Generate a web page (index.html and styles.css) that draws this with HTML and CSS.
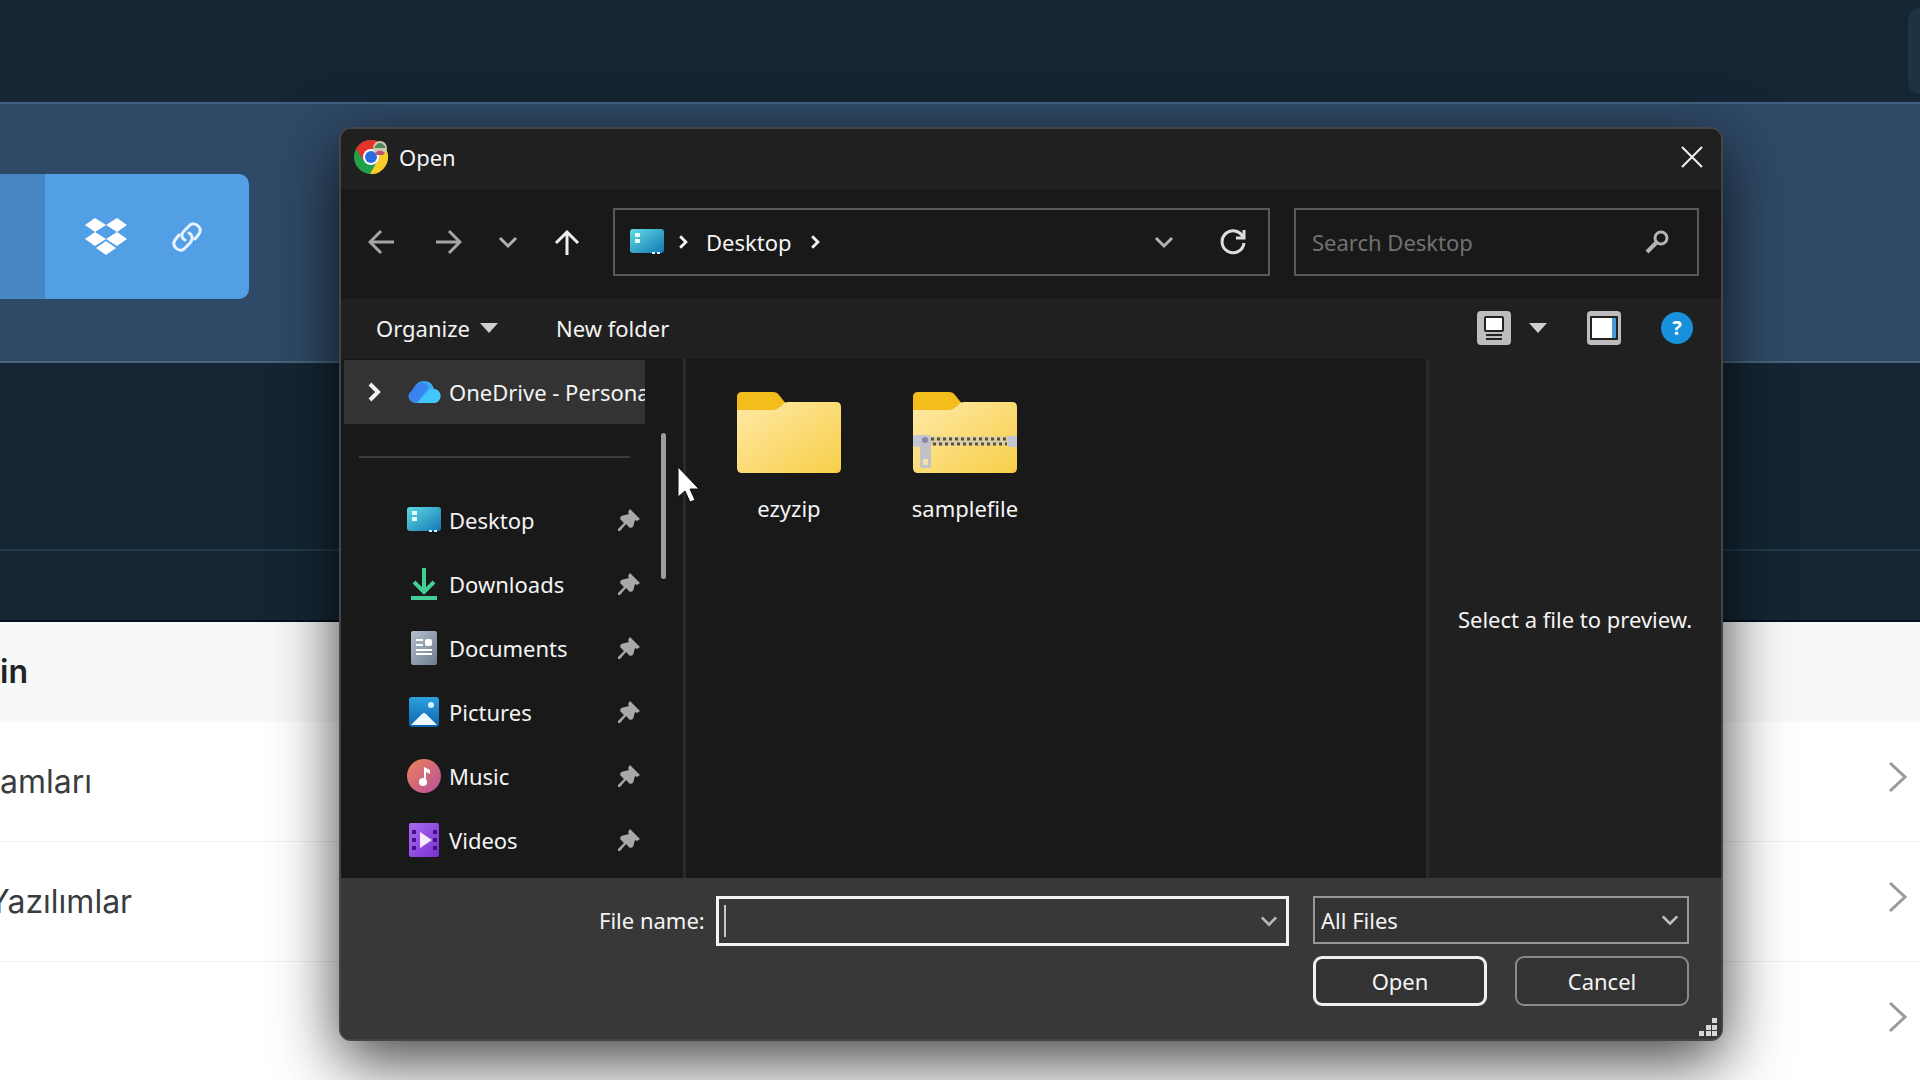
FILE: index.html
```html
<!DOCTYPE html>
<html lang="en">
<head>
<meta charset="utf-8">
<meta name="viewport" content="width=device-width, initial-scale=1">
<title>Open</title>
<link rel="stylesheet" href="styles.css">
</head>
<body>
<svg class="defs" aria-hidden="true">
  <defs>
    <linearGradient id="g-desk" x1="0" y1="0" x2="1" y2="1"><stop offset="0" stop-color="#5fdbe2"/><stop offset="1" stop-color="#1477b4"/></linearGradient>
    <linearGradient id="g-folder" x1="0" y1="0" x2="1" y2="1"><stop offset="0" stop-color="#ffe9a6"/><stop offset="1" stop-color="#f7cf48"/></linearGradient>
    <linearGradient id="g-doc" x1="0" y1="0" x2="1" y2="1"><stop offset="0" stop-color="#b4c0ce"/><stop offset="1" stop-color="#6d7c8d"/></linearGradient>
    <linearGradient id="g-cloud" x1="0" y1="0" x2="1" y2="0"><stop offset="0" stop-color="#2c86ee"/><stop offset="1" stop-color="#37c4fb"/></linearGradient>
    <linearGradient id="g-pic" x1="0" y1="0" x2="0" y2="1"><stop offset="0" stop-color="#2ba2df"/><stop offset="1" stop-color="#0d62ac"/></linearGradient>
    <linearGradient id="g-music" x1="0" y1="0" x2="1" y2="1"><stop offset="0" stop-color="#ee8359"/><stop offset="1" stop-color="#b64f9c"/></linearGradient>
    <linearGradient id="g-video" x1="0" y1="0" x2="1" y2="1"><stop offset="0" stop-color="#a96cf0"/><stop offset="1" stop-color="#7a2fd0"/></linearGradient>
    <symbol id="desk" viewBox="0 0 34 26"><rect x="0" y="0" width="34" height="24" rx="3" fill="url(#g-desk)"/><path d="M5 4h5v4H5zM5 10h5v4H5z" fill="#dffcff"/><path d="M22 24h3M27 24h3" stroke="#d5f2ff" stroke-width="2"/></symbol>
    <symbol id="pin" viewBox="0 0 24 24"><path d="M13 1 23 11 20 13 18 12 16 19 13 20 9 16 3 23 1 23 1 21 7 15 3 11 4 8 12 6 11 4z" fill="#a9a9a9"/></symbol>
    <symbol id="down" viewBox="0 0 20 20"><path d="M2 6 10 14 18 6" fill="none" stroke="currentColor" stroke-width="3"/></symbol>
    <symbol id="next" viewBox="0 0 14 20"><path d="M3 2 11 10 3 18" fill="none" stroke="currentColor" stroke-width="4"/></symbol>
    <symbol id="tri" viewBox="0 0 18 10"><path d="M0 0h18L9 10z" fill="#cfcfcf"/></symbol>
    <symbol id="more" viewBox="0 0 20 34"><path d="M2 3 17 17 2 31" fill="none" stroke="#9a9a9a" stroke-width="3"/></symbol>
  </defs>
</svg>

<div class="page">
  <header class="topbar"><button class="topbar-tile" type="button" aria-label="Menu"></button></header>
  <section class="hero">
    <div class="upload">
      <div class="upload-main"></div>
      <div class="upload-sources">
        <button class="plain" type="button" aria-label="Dropbox"><svg width="42" height="38" viewBox="0 0 42 38" fill="#fff"><path d="M10 0 21 7 10 14 0 7zM32 0 42 7 32 14 21 7zM10 14 21 21 10 28 0 21zM32 14 42 21 32 28 21 21zM21 23 31 30 21 37 11 30z"/></svg></button>
        <button class="plain" type="button" aria-label="Link"><svg width="32" height="32" viewBox="0 0 32 32" fill="none" stroke="#e6f2ff" stroke-width="3" stroke-linecap="round"><path d="M14 19c-4-2-4-6-1-9l6-6c5-4 13 3 9 9l-4 5M18 12c4 2 4 7 1 10l-6 6c-5 4-13-3-9-9l4-5"/></svg></button>
      </div>
    </div>
  </section>
  <section class="band"></section>
  <section class="band band-low"></section>
  <section class="listing">
    <h2 class="listing-title">in</h2>
    <ul class="rows">
      <li><a class="row" href="#"><span>amları</span><svg class="more" width="20" height="34"><use href="#more"/></svg></a></li>
      <li><a class="row" href="#"><span class="row-cut">Yazılımlar</span><svg class="more" width="20" height="34"><use href="#more"/></svg></a></li>
      <li><a class="row" href="#"><span></span><svg class="more" width="20" height="34"><use href="#more"/></svg></a></li>
    </ul>
  </section>
</div>

<div class="dialog" role="dialog" aria-labelledby="dlg-title">
  <div class="titlebar">
    <svg width="34" height="34" viewBox="0 0 34 34"><circle cx="17" cy="17" r="17" fill="#1fa04a"/><path d="M2 9A17 17 0 0 1 32 9H17L10 21z" fill="#e3342c"/><path d="M32 9A17 17 0 0 1 16 34L24 20 21 9z" fill="#f9cd2c"/><circle cx="17" cy="17" r="8" fill="#fff"/><circle cx="17" cy="17" r="6" fill="#2b6de0"/><circle cx="26" cy="8" r="7" fill="#cfc6b4"/><path d="M20 8q6-10 12 0z" fill="#4d8a55"/><path d="M21 13q5-5 10 0l-2 2h-6z" fill="#c0506c"/></svg>
    <h1 class="title" id="dlg-title">Open</h1>
    <button class="plain" type="button" aria-label="Close"><svg width="22" height="22" viewBox="0 0 22 22"><path d="M1 1 21 21M21 1 1 21" stroke="#f2f2f2" stroke-width="2"/></svg></button>
  </div>

  <div class="nav">
    <div class="nav-buttons">
      <button class="plain back" type="button" aria-label="Back"><svg width="26" height="26" viewBox="0 0 26 26" fill="none" stroke="#a5a5a5" stroke-width="3"><path d="M26 13H2M13 2 2 13 13 24"/></svg></button>
      <button class="plain" type="button" aria-label="Forward"><svg width="26" height="26" viewBox="0 0 26 26" fill="none" stroke="#a5a5a5" stroke-width="3"><path d="M0 13H24M13 2 24 13 13 24"/></svg></button>
      <button class="plain dim" type="button" aria-label="Recent locations"><svg width="20" height="20"><use href="#down"/></svg></button>
      <button class="plain" type="button" aria-label="Up"><svg width="26" height="26" viewBox="0 0 26 26" fill="none" stroke="#efefef" stroke-width="3"><path d="M13 26V3M2 14 13 3 24 14"/></svg></button>
    </div>
    <div class="address">
      <svg width="34" height="26"><use href="#desk"/></svg>
      <svg width="10" height="16"><use href="#next"/></svg>
      <a class="crumb" href="#">Desktop</a>
      <svg width="10" height="16"><use href="#next"/></svg>
      <button class="plain push dim" type="button" aria-label="History"><svg width="20" height="20"><use href="#down"/></svg></button>
      <button class="plain" type="button" aria-label="Refresh"><svg width="26" height="26" viewBox="0 0 26 26" fill="none" stroke="#dedede" stroke-width="3"><path d="M23 8A11 11 0 1 0 24 14"/><path d="M24 1V9H16"/></svg></button>
    </div>
    <div class="search">
      <input class="search-input" type="search" placeholder="Search Desktop" aria-label="Search Desktop">
      <svg width="24" height="24" viewBox="0 0 24 24" fill="none" stroke="#b5b5b5"><circle cx="16" cy="8" r="6" stroke-width="3"/><path d="M11 13 2 22" stroke-width="4"/></svg>
    </div>
  </div>

  <div class="toolbar">
    <button class="plain organize" type="button">Organize<svg width="18" height="10"><use href="#tri"/></svg></button>
    <button class="plain" type="button">New folder</button>
    <div class="tools">
      <button class="plain view" type="button" aria-label="View"><svg width="34" height="34" viewBox="0 0 34 34"><rect width="34" height="34" rx="4" fill="#bdbdbd"/><rect x="8" y="6" width="18" height="14" rx="1" fill="#fff" stroke="#222" stroke-width="2"/><path d="M9 24h16M9 28h16" stroke="#222" stroke-width="2"/></svg><svg width="18" height="10"><use href="#tri"/></svg></button>
      <button class="plain" type="button" aria-label="Preview pane"><svg width="34" height="34" viewBox="0 0 34 34"><rect width="34" height="34" rx="4" fill="#bdbdbd"/><rect x="4" y="6" width="26" height="22" fill="#fff" stroke="#222" stroke-width="2"/><path d="M25 7h4v20h-4z" fill="#4a9bd4"/></svg></button>
      <button class="help" type="button">?</button>
    </div>
  </div>

  <div class="body">
    <nav class="side">
      <div class="side-list">
        <a class="place place-on" href="#"><svg width="14" height="20"><use href="#next"/></svg><svg class="cloud" width="34" height="24" viewBox="0 0 34 24"><path d="M7 23a7 7 0 0 1-1-13C8 4 12 1 17 1c6 0 9 4 10 8 9 1 8 14 0 14z" fill="url(#g-cloud)"/><path d="M5 11C9 2 17 0 22 7L10 22C2 23-2 15 5 11z" fill="#3d83f0"/><path d="M10 23 22 10c7-4 15 4 10 10-1 2-3 3-6 3z" fill="#43c6fb"/></svg><span>OneDrive - Personal</span></a>
        <hr class="rule">
        <a class="place" href="#"><svg width="34" height="26"><use href="#desk"/></svg><span>Desktop</span><svg class="pin" width="24" height="24"><use href="#pin"/></svg></a>
        <a class="place" href="#"><svg width="34" height="34" viewBox="0 0 34 34" fill="none" stroke="#41cf95" stroke-width="4"><path d="M17 1V25M7 15 17 25 27 15M4 31H30"/></svg><span>Downloads</span><svg class="pin" width="24" height="24"><use href="#pin"/></svg></a>
        <a class="place" href="#"><svg width="34" height="34" viewBox="0 0 34 34"><rect x="4" width="26" height="34" rx="2" fill="url(#g-doc)"/><path d="M9 9h7M9 14h7M9 19h16M9 23h16" stroke="#fff" stroke-width="2"/><rect x="18" y="8" width="7" height="7" rx="2" fill="#fff"/></svg><span>Documents</span><svg class="pin" width="24" height="24"><use href="#pin"/></svg></a>
        <a class="place" href="#"><svg width="34" height="34" viewBox="0 0 34 34"><rect x="2" y="2" width="30" height="30" rx="3" fill="url(#g-pic)"/><path d="M4 30 15 19q2-2 4 0L30 30z" fill="#eef8ff"/><circle cx="24" cy="10" r="3" fill="#d5f1ff"/></svg><span>Pictures</span><svg class="pin" width="24" height="24"><use href="#pin"/></svg></a>
        <a class="place" href="#"><svg width="34" height="34" viewBox="0 0 34 34"><circle cx="17" cy="17" r="17" fill="url(#g-music)"/><path d="M17 22V8l6 3v4l-4-2v10z" fill="#fff"/><circle cx="16" cy="23" r="4" fill="#fff"/></svg><span>Music</span><svg class="pin" width="24" height="24"><use href="#pin"/></svg></a>
        <a class="place" href="#"><svg width="34" height="34" viewBox="0 0 34 34"><rect x="2" width="30" height="34" rx="2" fill="url(#g-video)"/><path d="M13 9 25 17 13 25z" fill="#f7eaff"/><path d="M5 7h4v4H5zM5 15h4v4H5zM5 23h4v4H5zM26 7h4v4h-4zM26 15h4v4h-4zM26 23h4v4h-4z" fill="#43118a"/></svg><span>Videos</span><svg class="pin" width="24" height="24"><use href="#pin"/></svg></a>
      </div>
      <div class="scroll"></div>
    </nav>
    <div class="files">
      <a class="file" href="#"><svg width="104" height="82" viewBox="0 0 104 82"><path d="M0 24V6q0-5 5-5h31q4 0 6 3l8 10-6 10z" fill="#f3be1c"/><path d="M0 19h36q4 0 7-3l3-3q2-2 5-2h48q5 0 5 5v61q0 5-5 5H5q-5 0-5-5z" fill="url(#g-folder)"/></svg><span>ezyzip</span></a>
      <a class="file" href="#"><svg width="104" height="82" viewBox="0 0 104 82"><path d="M0 24V6q0-5 5-5h31q4 0 6 3l8 10-6 10z" fill="#f3be1c"/><path d="M0 19h36q4 0 7-3l3-3q2-2 5-2h48q5 0 5 5v61q0 5-5 5H5q-5 0-5-5z" fill="url(#g-folder)"/><path d="M0 50h104" stroke="#d8cfa8" stroke-width="9"/><path d="M18 48h76" stroke="#5d4f33" stroke-width="3" stroke-dasharray="3 3"/><path d="M20 53h74" stroke="#5d4f33" stroke-width="3" stroke-dasharray="3 3"/><rect x="0" y="44" width="18" height="12" rx="3" fill="#c6c6d2"/><rect x="95" y="45" width="9" height="11" fill="#c6c6d2"/><rect x="7" y="48" width="11" height="29" rx="2" fill="#c3c1c8"/><circle cx="12" cy="49" r="3" fill="#8784a8"/><rect x="10" y="68" width="5" height="6" fill="#f0e2ac"/></svg><span>samplefile</span></a>
    </div>
    <aside class="preview">Select a file to preview.</aside>
  </div>

  <form class="footer">
    <label class="name-label" for="fname">File name:</label>
    <div class="name-box"><span class="caret"></span><input class="name-input" id="fname" type="text"><svg width="18" height="18"><use href="#down"/></svg></div>
    <div class="actions">
      <div class="type-box"><select class="type" aria-label="File type"><option>All Files</option></select><svg width="18" height="18"><use href="#down"/></svg></div>
      <button class="btn btn-main" type="button">Open</button>
      <button class="btn" type="button">Cancel</button>
    </div>
    <svg class="grip" width="18" height="18" viewBox="0 0 18 18"><path d="M13 0h5v5h-5zM13 7h5v5h-5zM13 13h5v5h-5zM7 7h5v5H7zM7 13h5v5H7zM0 13h5v5H0z" fill="#d8d8d8"/></svg>
  </form>
</div>

<svg class="pointer" width="24" height="38" viewBox="0 0 24 38"><path d="M1 1V31L8 25 13 36 18 34 13 23H22z" fill="#fff" stroke="#111" stroke-width="1"/></svg>
</body>
</html>
```
FILE: styles.css
```css
* { box-sizing: border-box; }
body {
  margin: 0;
  min-height: 100vh;
  position: relative;
  background: #fff;
  font-family: "Noto Sans", "Open Sans", sans-serif;
  font-size: 22px;
  line-height: 30px;
  color: #f4f4f4;
}
svg { display: block; flex: none; }
a { color: inherit; text-decoration: none; }
button, input, select { font: inherit; color: inherit; }
.defs { position: absolute; width: 0; height: 0; }
.plain { display: flex; align-items: center; padding: 0; border: 0; background: none; }

/* Page behind the dialog */
.page { height: 100vh; overflow: hidden; }
.topbar { display: flex; justify-content: flex-end; height: 102px; padding: 8px 0; background: #142634; }
.topbar-tile { width: 80px; margin-right: -68px; border: 0; border-radius: 12px; background: #1d3341; }
.hero { height: 261px; padding-top: 70px; background: #2f4a67; border-top: 2px solid #416283; border-bottom: 2px solid #49647f; }
.upload { display: flex; width: 249px; height: 125px; border-radius: 0 10px 10px 0; overflow: hidden; }
.upload-main { width: 45px; background: #4686c2; }
.upload-sources { display: flex; flex: 1; align-items: center; justify-content: center; gap: 44px; padding-right: 6px; background: #539fe6; }
.band { height: 188px; background: #142634; border-bottom: 2px solid #22394a; }
.band-low { height: 71px; border-bottom-color: #03101e; }
.listing { color: #3a3d40; font-family: Inter, sans-serif; }
.listing-title { height: 100px; margin: 0; background: #f7f9f9; color: #202428; font-size: 32px; line-height: 100px; font-weight: 600; }
.rows { margin: 0; padding: 0; list-style: none; }
.row { display: flex; align-items: center; justify-content: space-between; height: 120px; padding-right: 12px; border-bottom: 1px solid #f0f0f0; font-size: 32px; line-height: 40px; }
.row-cut { margin-left: -12px; }
.more { margin-bottom: 10px; }

/* Dialog window */
.dialog {
  position: absolute;
  top: 127px;
  left: 339px;
  right: 197px;
  min-width: 1200px;
  border: 2px solid #454545;
  border-radius: 12px;
  overflow: hidden;
  background: #191919;
  box-shadow: 0 20px 64px rgba(0, 0, 0, .75);
}
.titlebar { display: flex; align-items: center; gap: 11px; height: 60px; padding: 0 18px 4px 13px; background: #202020; }
.title { flex: 1; margin: 0; font-size: 22px; font-weight: 400; }
.nav { display: flex; align-items: center; gap: 24px; height: 110px; padding: 0 22px 4px 27px; }
.nav-buttons { display: flex; align-items: center; gap: 36px; width: 221px; }
.back { margin-right: 6px; }
.dim { color: #b0b0b0; }
.address { display: flex; flex: 1; align-items: center; gap: 14px; height: 68px; padding: 0 22px 0 15px; border: 2px solid #5a5a5a; }
.crumb { margin: 0 4px; }
.push { margin-left: auto; margin-right: 32px; }
.search { display: flex; align-items: center; width: 405px; height: 68px; padding: 0 28px 0 16px; border: 2px solid #5a5a5a; }
.search-input { flex: 1; min-width: 0; padding: 0; border: 0; outline: 0; background: none; appearance: none; }
.search-input::placeholder { color: #717171; opacity: 1; }
.toolbar { display: flex; align-items: center; gap: 58px; height: 60px; padding: 0 28px 2px 35px; background: #202020; }
.organize { gap: 10px; }
.tools { display: flex; align-items: center; gap: 40px; margin-left: auto; }
.view { gap: 18px; }
.help { width: 32px; height: 32px; padding: 0; border: 0; border-radius: 50%; background: #1791dc; color: #fff; font-weight: 700; font-size: 20px; line-height: 32px; }

.body { display: flex; height: 519px; }
.side { display: flex; width: 345px; border-right: 3px solid #2a2a2a; }
.side-list { width: 301px; margin-left: 3px; padding-top: 1px; }
.place { display: flex; align-items: center; gap: 8px; height: 64px; padding: 0 4px 0 63px; white-space: nowrap; }
.place-on { padding: 0 0 0 23px; overflow: hidden; background: #333; }
.cloud { margin-left: 18px; }
.rule { height: 2px; margin: 32px 15px 30px; border: 0; background: #3c3c3c; }
.pin { margin-left: auto; }
.scroll { width: 5px; height: 146px; margin: 74px 0 0 16px; border-radius: 3px; background: #9c9c9c; }
.files { display: flex; flex: 1; padding: 32px 15px; }
.file { display: flex; flex-direction: column; align-items: center; gap: 20px; width: 176px; }
.preview { display: flex; align-items: center; justify-content: center; width: 295px; border-left: 3px solid #292929; background: #202020; white-space: nowrap; }

.footer { display: flex; align-items: flex-start; position: relative; height: 161px; padding: 18px 32px 0 258px; background: #383838; }
.name-label { line-height: 48px; margin-right: 11px; }
.name-box { display: flex; flex: 1; align-items: center; height: 50px; margin-right: 24px; padding: 0 8px 0 5px; border: 3px solid #f4f4f4; color: #b8b8b8; }
.caret { width: 2px; height: 32px; background: #c4c4c4; }
.name-input { flex: 1; min-width: 0; padding: 0; border: 0; outline: 0; background: none; }
.actions { display: grid; grid-template-columns: 174px 174px; gap: 12px 28px; width: 376px; }
.type-box { display: grid; grid-column: 1 / 3; align-items: center; color: #c0c0c0; }
.type-box > * { grid-area: 1 / 1; }
.type-box svg { justify-self: end; margin-right: 10px; pointer-events: none; }
.type { width: 100%; height: 48px; padding: 0 6px; border: 2px solid #979797; background: #333; color: #f4f4f4; appearance: none; }
.btn { height: 50px; padding: 0; border: 2px solid #8a8a8a; border-radius: 9px; background: #333; }
.btn-main { border: 3px solid #f0f0f0; }
.grip { position: absolute; right: 4px; bottom: 3px; }
.pointer { position: absolute; left: 677px; top: 466px; }
```
